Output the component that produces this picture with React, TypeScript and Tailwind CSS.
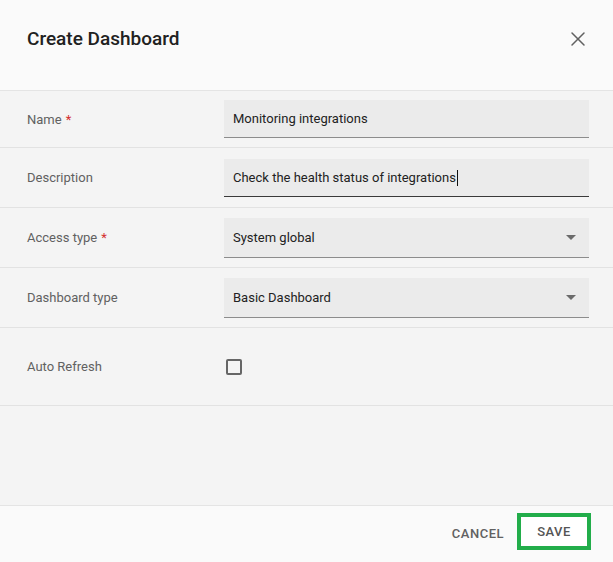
import { X } from "lucide-react"

const Star = () => <span className="ml-1 text-[#d32f2f]">*</span>

const Row = ({ label, required, height, children }: { label: string; required?: boolean; height: string; children: React.ReactNode }) => (
    <div className={`flex items-center border-b border-[#e2e2e2] pl-[27px] pr-[24px] ${height}`}>
        <div className="w-[197px] shrink-0 pt-px text-[13px] text-[#616161]">
            {label}
            {required && <Star />}
        </div>
        <div className="flex-1">{children}</div>
    </div>
)

const TextField = ({ value, focused }: { value: string; focused?: boolean }) => (
    <div
        className={`flex h-[38px] items-center bg-[#ebebeb] px-[9px] pt-px text-[13px] text-[#222] border-b ${focused ? "border-[#3a3a3a]" : "border-[#8c8c8c]"}`}
    >
        {value}
        {focused && <span className="ml-px h-[16px] w-px bg-[#111]" />}
    </div>
)

const SelectField = ({ value }: { value: string }) => (
    <div className="flex h-[40px] items-center justify-between bg-[#ebebeb] px-[9px] pt-px text-[13px] text-[#222] border-b border-[#8c8c8c]">
        <span>{value}</span>
        <span className="mr-[4px] h-0 w-0 border-x-[5px] border-t-[5px] border-x-transparent border-t-[#6b6b6b]" />
    </div>
)

export default function App() {
    return (
        <div className="flex h-[562px] w-[613px] flex-col bg-[#f4f4f4] font-['Roboto',sans-serif]">
            {/* Header */}
            <div className="flex h-[91px] shrink-0 items-center justify-between border-b border-[#e4e4e4] bg-[#fafafa] pl-[27px] pr-[23px]">
                <h2 className="-mt-[11px] text-[19px] font-medium text-[#212121]">Create Dashboard</h2>
                <X className="-mt-[12px] h-6 w-6 text-[#616161]" strokeWidth={1.5} />
            </div>

            {/* Form rows */}
            <div className="flex-1">
                <Row label="Name" required height="h-[57px]">
                    <TextField value="Monitoring integrations" />
                </Row>
                <Row label="Description" height="h-[60px]">
                    <TextField value="Check the health status of integrations" focused />
                </Row>
                <Row label="Access type" required height="h-[60px]">
                    <SelectField value="System global" />
                </Row>
                <Row label="Dashboard type" height="h-[60px]">
                    <SelectField value="Basic Dashboard" />
                </Row>
                <Row label="Auto Refresh" height="h-[78px]">
                    <div className="ml-[2px] h-[16px] w-[16px] rounded-[2px] border-2 border-[#666]" />
                </Row>
            </div>

            {/* Footer */}
            <div className="flex h-[57px] shrink-0 items-center justify-end gap-[13px] border-t border-[#e4e4e4] bg-[#fafafa] pb-[5px] pr-[22px]">
                <button className="pt-[4px] text-[13px] font-medium tracking-[0.5px] text-[#616161]">CANCEL</button>
                <button className="flex h-[37px] w-[74px] items-center justify-center border-4 border-[#22ad4a] bg-white text-[13px] font-medium tracking-[0.5px] text-[#555]">
                    SAVE
                </button>
            </div>
        </div>
    )
}
